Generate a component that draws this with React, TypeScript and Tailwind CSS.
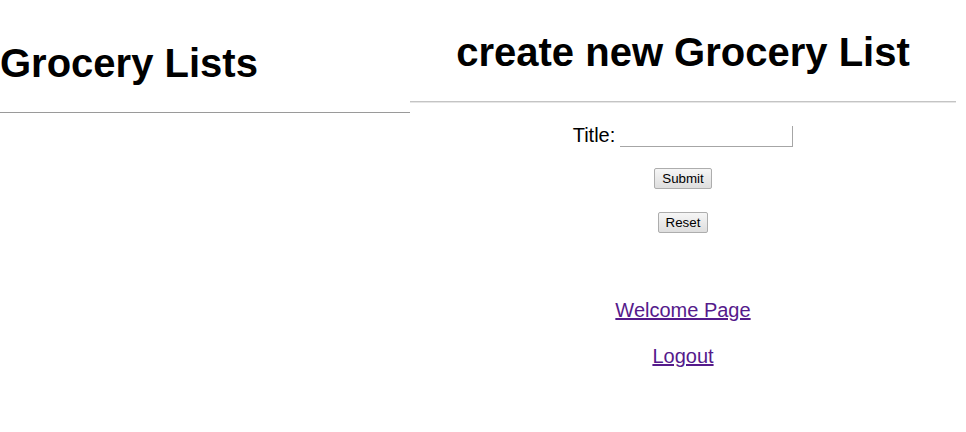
import React from "react";

export default function App() {
  return (
    <div className="flex w-[966px] h-[432px] bg-white text-black" style={{ fontFamily: '"Liberation Sans", Arial, sans-serif' }}>
      <div className="w-[410px] flex flex-col pt-[40px]">
        <h1 className="text-[40px] leading-[46px] font-bold m-0">Grocery Lists</h1>
        <div className="mt-[26px] h-0 border-t border-[#9a9a9a]" />
      </div>
      <div className="w-[546px] flex flex-col pt-[29px]">
        <h1 className="text-[40px] leading-[46px] font-bold text-center m-0">create new Grocery List</h1>
        <div className="mt-[26px] h-[2px] border-t border-[#c4c4c4] border-b border-b-[#e6e6e6]" />
        <form className="flex flex-col items-center" onSubmit={(e) => e.preventDefault()}>
          <div className="mt-[21px] flex items-start gap-[5px] h-[24px]">
            <span className="text-[20px] leading-[23px]">Title:</span>
            <input
              type="text"
              className="mt-[2px] w-[173px] h-[21px] border-0 border-b border-r border-[#a6a6a6] outline-none bg-white text-[13px]"
            />
          </div>
          <button
            type="submit"
            className="mt-[20px] h-[21px] px-[7px] text-[13.33px] leading-[15px] border border-[#adadad] rounded-[2px] bg-gradient-to-b from-[#f6f6f6] to-[#dedede] text-black"
          >
            Submit
          </button>
          <button
            type="reset"
            className="mt-[23px] h-[21px] px-[7px] text-[13.33px] leading-[15px] border border-[#adadad] rounded-[2px] bg-gradient-to-b from-[#f6f6f6] to-[#dedede] text-black"
          >
            Reset
          </button>
          <a href="#" className="mt-[66px] text-[20px] leading-[23px] text-[#551a8b] underline">
            Welcome Page
          </a>
          <a href="#" className="mt-[23px] text-[20px] leading-[23px] text-[#551a8b] underline">
            Logout
          </a>
        </form>
      </div>
    </div>
  );
}
